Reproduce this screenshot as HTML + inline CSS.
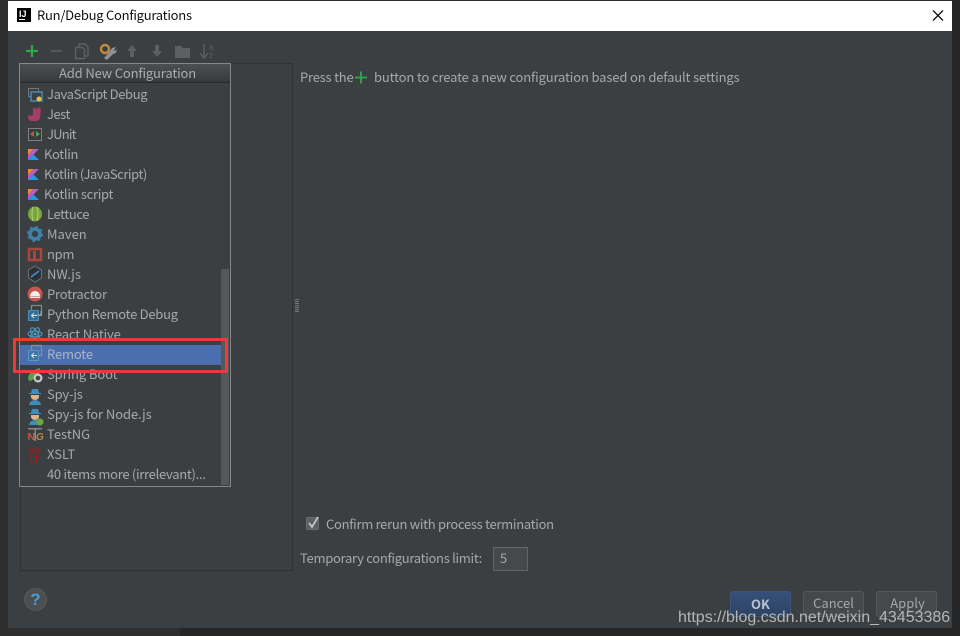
<!DOCTYPE html>
<html><head><meta charset="utf-8"><style>
html,body{margin:0;padding:0;width:960px;height:636px;overflow:hidden;background:#2b2b2b}
*{box-sizing:border-box}
body{position:relative;font-family:"Noto Sans CJK SC","Liberation Sans",sans-serif;font-size:13px;color:#a4a8aa}
.a{position:absolute}
.t{position:absolute;white-space:nowrap;line-height:20px;height:20px;color:#a6a9ab}
svg{position:absolute;overflow:visible}
</style></head><body>
<div class="a" style="left:0;top:0;width:960px;height:636px;background:#2e2e2e"></div>
<div class="a" style="left:180px;top:628px;width:780px;height:8px;background:#262626"></div>
<div class="a" style="left:952px;top:0;width:8px;height:636px;background:#262626"></div>
<div class="a" style="left:8px;top:1px;width:944px;height:627px;background:#3c3f41"></div>
<div class="a" style="left:8px;top:1px;width:944px;height:30px;background:#fff"></div>
<div class="a" style="left:17px;top:8px;width:14px;height:14px;background:#000"></div>
<div class="a" style="left:19px;top:8px;color:#fff;font:bold 9px/12px 'Liberation Sans',sans-serif">IJ</div>
<div class="a" style="left:19px;top:19px;width:6px;height:1px;background:#fff"></div>
<div class="a" style="left:37px;top:5px;color:#111;line-height:19px;font-size:13px;white-space:nowrap;letter-spacing:-.25px">Run/Debug Configurations</div>
<svg style="left:0;top:0" width="960" height="636">
<path d="M933 10.500L943 20.500M943 10.500L933 20.500" stroke="#111" stroke-width="1.300" fill="none"/>
<path d="M26 51h12M32 45v12" stroke="#2fa84f" stroke-width="2.200"/>
<path d="M51 51h11" stroke="#55585a" stroke-width="2"/>
<path d="M75.500 47.500h7l2 2v9h-9z M79 47v-3h6l3 3v9h-3" fill="none" stroke="#5d6062" stroke-width="1.400"/>
<circle cx="105" cy="49" r="4" fill="none" stroke="#c08a3c" stroke-width="2.400"/>
<path d="M104 58l6-7 2-3 4-1-2 3 1 1 2-2-1 4-3 1-6 6z" fill="#8f9294"/>
<path d="M132 45l5 6h-3v6h-4v-6h-3z" fill="#5d6062"/>
<path d="M157 57l5-6h-3v-6h-4v6h-3z" fill="#5d6062"/>
<path d="M175 46h6l2 2h7v10h-15z" fill="#5d6062"/>
<path d="M204 44v13M200 53l4 5 4-5" stroke="#5d6062" stroke-width="1.400" fill="none"/>
<text x="209" y="50" font-size="8" fill="#5d6062" font-family="Liberation Sans">a</text>
<text x="209" y="58" font-size="8" fill="#5d6062" font-family="Liberation Sans">z</text>
</svg>
<div class="a" style="left:20px;top:63px;width:273px;height:508px;border:1px solid #323232"></div>
<div class="a" style="left:295px;top:299px;width:4px;height:13px;background:repeating-linear-gradient(#777 0 1px,#3c3f41 1px 2px)"></div>
<div class="a" style="left:19px;top:63px;width:212px;height:424px;background:#3c3f41;border:1px solid #85888a"></div>
<div class="a" style="left:20px;top:64px;width:210px;height:19px;background:linear-gradient(#4c4e50,#393a3b);border-bottom:1px solid #2a2a2a;text-align:center;line-height:18px;color:#a9acae;letter-spacing:-.15px;padding-left:5px">Add New Configuration</div>
<div class="a" style="left:221px;top:269px;width:8px;height:216px;background:#55585a"></div>
<div class="t" style="left:47px;top:84px;letter-spacing:-.37px">JavaScript Debug</div>
<div class="t" style="left:47px;top:104px;letter-spacing:-.5px">Jest</div>
<div class="t" style="left:47px;top:124px;letter-spacing:-.8px">JUnit</div>
<div class="t" style="left:44px;top:144px;letter-spacing:-.33px">Kotlin</div>
<div class="t" style="left:44px;top:164px;letter-spacing:-.44px">Kotlin (JavaScript)</div>
<div class="t" style="left:44px;top:184px;letter-spacing:-.3px">Kotlin script</div>
<div class="t" style="left:47px;top:204px;letter-spacing:-.4px">Lettuce</div>
<div class="t" style="left:47px;top:224px">Maven</div>
<div class="t" style="left:47px;top:244px;letter-spacing:-.3px">npm</div>
<div class="t" style="left:47px;top:264px">NW.js</div>
<div class="t" style="left:47px;top:284px;letter-spacing:-.2px">Protractor</div>
<div class="t" style="left:47px;top:304px;letter-spacing:-.26px">Python Remote Debug</div>
<div class="t" style="left:47px;top:324px;letter-spacing:-.17px">React Native</div>
<div class="t" style="left:47px;top:364px;letter-spacing:-.1px">Spring Boot</div>
<div class="t" style="left:47px;top:384px;letter-spacing:-.17px">Spy-js</div>
<div class="t" style="left:47px;top:404px;letter-spacing:-.06px">Spy-js for Node.js</div>
<div class="t" style="left:47px;top:424px">TestNG</div>
<div class="t" style="left:47px;top:444px">XSLT</div>
<div class="t" style="left:47px;top:464px;letter-spacing:-.28px">40 items more (irrelevant)...</div>
<div class="a" style="left:20px;top:345px;width:201px;height:20px;background:#4b6eaf"></div>
<div class="t" style="left:47px;top:344px;color:#a9b4c4;letter-spacing:-.17px">Remote</div>
<svg style="left:0;top:0" width="960" height="636">
<rect x="28.500" y="88.500" width="10" height="8" fill="none" stroke="#777"/><rect x="31" y="92" width="11" height="9" fill="#3c3f41" stroke="#4a90c0" stroke-width="1.400"/><circle cx="39" cy="99" r="2.500" fill="#e8c04a"/>
<path d="M33 107l3 2 3-2 2 2-1 9q-1 3-5 3h-3q-3 0-4-3v-3l2 1 3-1z" fill="#a83b67"/>
<rect x="28.500" y="128.500" width="13" height="12" fill="#3a3a3a" stroke="#7e8183"/><path d="M34 131v6l-4-3z" fill="#c0564c"/><path d="M36 131v6l4-3z" fill="#4aa65a"/>
<g><path d="M28 149h5.500l-5.500 6z" fill="#f28a2e"/><path d="M33.500 149h5.500l-11 11v-5z" fill="#b65ec5"/><path d="M28 160l5.500-5.500 5.500 5.500z" fill="#1e9be8"/></g>
<g transform="translate(0,20)"><path d="M28 149h5.500l-5.500 6z" fill="#f28a2e"/><path d="M33.500 149h5.500l-11 11v-5z" fill="#b65ec5"/><path d="M28 160l5.500-5.500 5.500 5.500z" fill="#1e9be8"/></g>
<g transform="translate(0,40)"><path d="M28 149h5.500l-5.500 6z" fill="#f28a2e"/><path d="M33.500 149h5.500l-11 11v-5z" fill="#b65ec5"/><path d="M28 160l5.500-5.500 5.500 5.500z" fill="#1e9be8"/></g>
<ellipse cx="35" cy="214" rx="7" ry="7.500" fill="#79a63c"/><path d="M33 207q-2 7 0 14M37 207q2 7 0 14" stroke="#b7d27a" fill="none"/>
<circle cx="35" cy="234" r="5" fill="none" stroke="#3d82a8" stroke-width="3.500"/><circle cx="35" cy="234" r="7" fill="none" stroke="#3d82a8" stroke-width="2" stroke-dasharray="2.500 3"/>
<rect x="29" y="249" width="12" height="11" fill="none" stroke="#a8473a" stroke-width="2.500"/><rect x="33" y="251" width="3" height="8" fill="#a8473a"/>
<path d="M35 266l6.500 4v8l-6.500 4-6.500-4v-8z" fill="#2c3138" stroke="#6f7378"/><path d="M31 277l8-6" stroke="#4a90d0" stroke-width="1.500"/>
<circle cx="35" cy="294" r="7.500" fill="#c9564c"/><path d="M30 296a5 5 0 0 1 10 0z" fill="#eee"/><rect x="30" y="296.500" width="10" height="1.500" fill="#eee"/>
<path d="M31.500 311v-5.500h10v10h-3" fill="none" stroke="#85888a" stroke-width="1.200"/><rect x="28.500" y="310.500" width="10" height="10" fill="#2f6f98" stroke="#4a8cb8"/><path d="M37 315.500h-5M34 313l-2.500 2.500 2.500 2.500" stroke="#ddd" fill="none"/><path d="M41 311v4h-5" stroke="#a8abad" fill="none"/>
<g fill="none" stroke="#4f9bc4"><ellipse cx="35" cy="334" rx="7" ry="3"/><ellipse cx="35" cy="334" rx="7" ry="3" transform="rotate(60 35 334)"/><ellipse cx="35" cy="334" rx="7" ry="3" transform="rotate(120 35 334)"/></g><circle cx="35" cy="334" r="1.500" fill="#4f9bc4"/>
<g transform="translate(0,40)"><path d="M31.500 311v-5.500h10v10h-3" fill="none" stroke="#8a8e96" stroke-width="1.200"/><rect x="28.500" y="310.500" width="10" height="10" fill="#3d76a6" stroke="#5a96c4"/><path d="M37 315.500h-5M34 313l-2.500 2.500 2.500 2.500" stroke="#ddd" fill="none"/></g>
<path d="M28 378q1-7 12-10q0 6-3 8l-6 5q-3 0-3-3z" fill="#5aa04a"/><circle cx="38" cy="378" r="4.500" fill="#c8c8c8"/><circle cx="38" cy="378" r="2.300" fill="#444"/>
<path d="M31 393l1-4h6l1 4h2v1h-12v-1z" fill="#3d8ebc"/><path d="M31 395h8v2a4 3 0 0 1-8 0z" fill="#d9b48c"/><path d="M29 405q1-5 6-5t6 5z" fill="#3d8ebc"/>
<g transform="translate(0,20)"><path d="M31 393l1-4h6l1 4h2v1h-12v-1z" fill="#3d8ebc"/><path d="M31 395h8v2a4 3 0 0 1-8 0z" fill="#d9b48c"/><path d="M29 405q1-5 6-5t6 5z" fill="#3d8ebc"/><circle cx="40" cy="402" r="3.500" fill="#6aa83f"/></g>
<rect x="28" y="428" width="14" height="1.500" fill="#888"/><rect x="34.500" y="428" width="1.500" height="13" fill="#888"/>
<text x="27.500" y="440" font-size="10.500" fill="#c5563f" font-family="Liberation Sans" font-weight="bold">N</text><text x="36" y="440" font-size="10" fill="#b4894c" font-family="Liberation Sans" font-style="italic" font-weight="bold">G</text>
<text x="29" y="454" font-size="8" fill="#a51a1a" font-family="Liberation Sans" font-weight="bold">XS</text><text x="30" y="462" font-size="8" fill="#a51a1a" font-family="Liberation Sans" font-weight="bold">LT</text>
<path d="M355 77.500h12M361 71.500v12" stroke="#2fa84f" stroke-width="1.800"/>
</svg>
<div class="a" style="left:13px;top:338px;width:215px;height:35px;border:3px solid #f0373a"></div>
<div class="t" style="left:300px;top:67px;letter-spacing:-.22px">Press the</div>
<div class="t" style="left:374px;top:67px;letter-spacing:-.145px">button to create a new configuration based on default settings</div>
<div class="a" style="left:306px;top:517px;width:13px;height:13px;background:#5d6062;border:1px solid #6b6e70;border-radius:2px"></div>
<svg style="left:0;top:0" width="960" height="636"><path d="M309 523l3 4 6-10" stroke="#c9cbcc" stroke-width="1.700" fill="none"/></svg>
<div class="t" style="left:326px;top:514px;letter-spacing:-.29px">Confirm rerun with process termination</div>
<div class="t" style="left:300px;top:548px;letter-spacing:-.29px">Temporary configurations limit:</div>
<div class="a" style="left:493px;top:547px;width:35px;height:24px;background:#45494a;border:1px solid #646464;padding-left:6px;line-height:20px">5</div>
<div class="a" style="left:24px;top:588px;width:23px;height:23px;border-radius:50%;background:#4b4f51;border:1px solid #55585a;color:#4a9fd4;font:bold 17px/21px 'Liberation Sans',sans-serif;text-align:center">?</div>
<div class="a" style="left:730px;top:591px;width:61px;height:26px;background:linear-gradient(#35507a,#2e4463);border:1px solid #3e5675;border-radius:3px;color:#b8c2cc;font-weight:bold;text-align:center;line-height:23px">OK</div>
<div class="a" style="left:803px;top:591px;width:61px;height:26px;background:#45494b;border:1px solid #55585a;border-radius:3px;text-align:center;line-height:22px">Cancel</div>
<div class="a" style="left:876px;top:591px;width:61px;height:26px;background:#45494b;border:1px solid #55585a;border-radius:3px;text-align:center;line-height:22px;padding-left:2px">Apply</div>
<div class="a" style="left:678px;top:608px;white-space:nowrap;font:16px/20px 'Liberation Sans',sans-serif;color:#b4b6b7">https://blog.csdn.net/weixin_43453386</div>
</body></html>
